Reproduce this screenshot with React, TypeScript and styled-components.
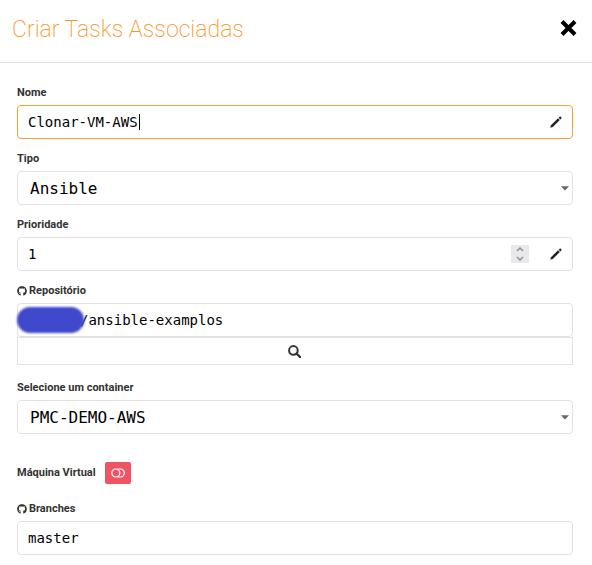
import React, { useState } from "react";
import styled, { createGlobalStyle } from "styled-components";
import { FaGithub } from "react-icons/fa";

const GlobalStyle = createGlobalStyle`
  *, *::before, *::after { box-sizing: border-box; }
  body {
    margin: 0;
    background: #fff;
    color: #333;
    font-family: Roboto, "Liberation Sans", sans-serif;
  }
`;

const mono = `"DejaVu Sans Mono", "Liberation Mono", monospace`;

const Header = styled.header`
  display: flex;
  align-items: center;
  justify-content: space-between;
  height: 63px;
  padding: 0 15px 6px 12px;
  border-bottom: 1px solid #e1e1e1;
`;

const Title = styled.h1`
  margin: 0;
  padding-top: 3px;
  color: #fb9526;
  font-size: 23px;
  font-weight: 200;
  line-height: 32px;
`;

const CloseButton = styled.button`
  display: flex;
  padding: 0;
  border: 0;
  background: none;
  color: #000;
  cursor: pointer;
`;

const Form = styled.form`
  display: flex;
  flex-direction: column;
  padding: 22px 19px 10px 17px;
`;

const Group = styled.div<{ $gap?: number }>`
  margin-bottom: ${(p) => p.$gap ?? 12}px;
`;

const Label = styled.label`
  display: flex;
  align-items: center;
  gap: 2px;
  margin-bottom: 4px;
  font-size: 11px;
  font-weight: 700;
  line-height: 16px;
`;

const Control = styled.div<{ $active?: boolean }>`
  position: relative;
  display: flex;
  align-items: center;
  height: 34px;
  border: 1px solid ${(p) => (p.$active ? "#fb9e33" : "#e2e2e4")};
  border-radius: 4px;
  background: #fff;
`;

const Input = styled.input`
  flex: 1;
  min-width: 0;
  height: 32px;
  padding: 0 10px;
  border: 0;
  outline: 0;
  background: transparent;
  color: #000;
  font-family: ${mono};
  font-size: 14px;
  appearance: textfield;
  &::-webkit-inner-spin-button { appearance: none; }
`;

const Select = styled.select`
  flex: 1;
  min-width: 0;
  height: 32px;
  padding: 0 24px 0 12px;
  border: 0;
  outline: 0;
  appearance: none;
  background: transparent;
  color: #000;
  font-family: ${mono};
  font-size: 16px;
`;

const Arrow = styled.svg`
  position: absolute;
  right: 3px;
  pointer-events: none;
`;

const Caret = styled.span`
  position: absolute;
  left: calc(11px + 13ch);
  width: 1px;
  height: 16px;
  background: #000;
  font-family: ${mono};
  font-size: 14px;
`;

const EditButton = styled.button`
  display: flex;
  margin-right: 10px;
  padding: 0;
  border: 0;
  background: none;
  color: #222;
`;

const Stepper = styled.div`
  display: flex;
  flex-direction: column;
  width: 18px;
  height: 18px;
  margin-right: 21px;
  background: #e9e9ed;
`;

const StepButton = styled.button`
  display: flex;
  align-items: center;
  justify-content: center;
  height: 9px;
  padding: 0;
  border: 0;
  background: none;
  color: #8f8f9d;
`;

const Redaction = styled.span`
  position: absolute;
  left: -1px;
  width: 67px;
  height: 26px;
  border-radius: 13px;
  background: #4048cc;
  filter: blur(1px);
`;

const RepoInput = styled(Input)`
  padding-left: 62px;
`;

const SearchButton = styled.button`
  display: flex;
  align-items: center;
  justify-content: center;
  width: 100%;
  height: 28px;
  padding: 0 2px 0 0;
  border: 1px solid #e2e2e4;
  background: #fff;
  color: #333;
`;

const SwitchRow = styled.div`
  display: flex;
  align-items: center;
  gap: 9px;
  margin-bottom: 17px;
`;

const SwitchLabel = styled(Label)`
  margin: 0;
`;

const SwitchButton = styled.button`
  display: flex;
  align-items: center;
  justify-content: center;
  width: 26px;
  height: 22px;
  padding: 0;
  border: 0;
  border-radius: 2px;
  background: #ed5565;
  color: #fff;
`;

const Pencil = () => (
  <svg width="12" height="12" viewBox="0 0 12 12" fill="currentColor" aria-hidden="true">
    <path d="M0.3 11.7 1 9.2 8 2.3 9.8 4.1 2.8 11Z" />
    <path d="M8.6 1.7 9.6 0.7Q10.2 0.2 10.8 0.7L11.3 1.2Q11.8 1.8 11.3 2.4L10.4 3.4Z" />
  </svg>
);

const DownArrow = () => (
  <Arrow width="8" height="5" viewBox="0 0 8 5" fill="#666" aria-hidden="true">
    <path d="M0 0.3H8L4 4.6Z" />
  </Arrow>
);

const Chevron = ({ up }: { up?: boolean }) => (
  <svg width="8" height="5" viewBox="0 0 8 5" fill="none" stroke="currentColor" strokeWidth="1.5" aria-hidden="true">
    <path d={up ? "M1 4 4 1 7 4" : "M1 1 4 4 7 1"} />
  </svg>
);

export default function App() {
  const [name, setName] = useState("Clonar-VM-AWS");
  const [priority, setPriority] = useState(1);
  const [virtual, setVirtual] = useState(false);

  return (
    <>
      <GlobalStyle />
      <Header>
        <Title>Criar Tasks Associadas</Title>
        <CloseButton type="button" aria-label="Fechar">
          <svg width="17" height="16" viewBox="0 0 17 16" fill="none" stroke="currentColor" strokeWidth="4" aria-hidden="true">
            <path d="M2 1.5 15 14.5M15 1.5 2 14.5" />
          </svg>
        </CloseButton>
      </Header>
      <Form onSubmit={(e) => e.preventDefault()}>
        <Group>
          <Label htmlFor="nome">Nome</Label>
          <Control $active>
            <Input id="nome" value={name} onChange={(e) => setName(e.target.value)} />
            <Caret />
            <EditButton type="button" aria-label="Editar nome"><Pencil /></EditButton>
          </Control>
        </Group>
        <Group>
          <Label htmlFor="tipo">Tipo</Label>
          <Control>
            <Select id="tipo"><option>Ansible</option></Select>
            <DownArrow />
          </Control>
        </Group>
        <Group>
          <Label htmlFor="prioridade">Prioridade</Label>
          <Control>
            <Input id="prioridade" type="number" value={priority} onChange={(e) => setPriority(Number(e.target.value))} />
            <Stepper>
              <StepButton type="button" aria-label="Aumentar" onClick={() => setPriority(priority + 1)}><Chevron up /></StepButton>
              <StepButton type="button" aria-label="Diminuir" onClick={() => setPriority(priority - 1)}><Chevron /></StepButton>
            </Stepper>
            <EditButton type="button" aria-label="Editar prioridade"><Pencil /></EditButton>
          </Control>
        </Group>
        <Group $gap={15}>
          <Label htmlFor="repositorio"><FaGithub size={10} />Repositório</Label>
          <Control>
            <RepoInput id="repositorio" defaultValue="/ansible-examplos" />
            <Redaction />
          </Control>
          <SearchButton type="button" aria-label="Buscar repositório">
            <svg width="13" height="13" viewBox="0 0 13 13" fill="none" stroke="currentColor" strokeWidth="2" aria-hidden="true">
              <circle cx="5.4" cy="5.4" r="4.3" />
              <path d="M8.5 8.5 12 12" strokeWidth="2.4" strokeLinecap="round" />
            </svg>
          </SearchButton>
        </Group>
        <Group $gap={28}>
          <Label htmlFor="container">Selecione um container</Label>
          <Control>
            <Select id="container"><option>PMC-DEMO-AWS</option></Select>
            <DownArrow />
          </Control>
        </Group>
        <SwitchRow>
          <SwitchLabel htmlFor="virtual">Máquina Virtual</SwitchLabel>
          <SwitchButton id="virtual" type="button" role="switch" aria-checked={virtual} onClick={() => setVirtual(!virtual)}>
            <svg width="14" height="10" viewBox="0 0 14 10" fill="none" stroke="currentColor" strokeWidth="1.2" aria-hidden="true">
              <circle cx="4.8" cy="5" r="4" />
              <path d="M6.5 1H9.3A4 4 0 0 1 9.3 9H6.5" />
            </svg>
          </SwitchButton>
        </SwitchRow>
        <Group $gap={0}>
          <Label htmlFor="branches"><FaGithub size={10} />Branches</Label>
          <Control>
            <Input id="branches" defaultValue="master" />
          </Control>
        </Group>
      </Form>
    </>
  );
}
